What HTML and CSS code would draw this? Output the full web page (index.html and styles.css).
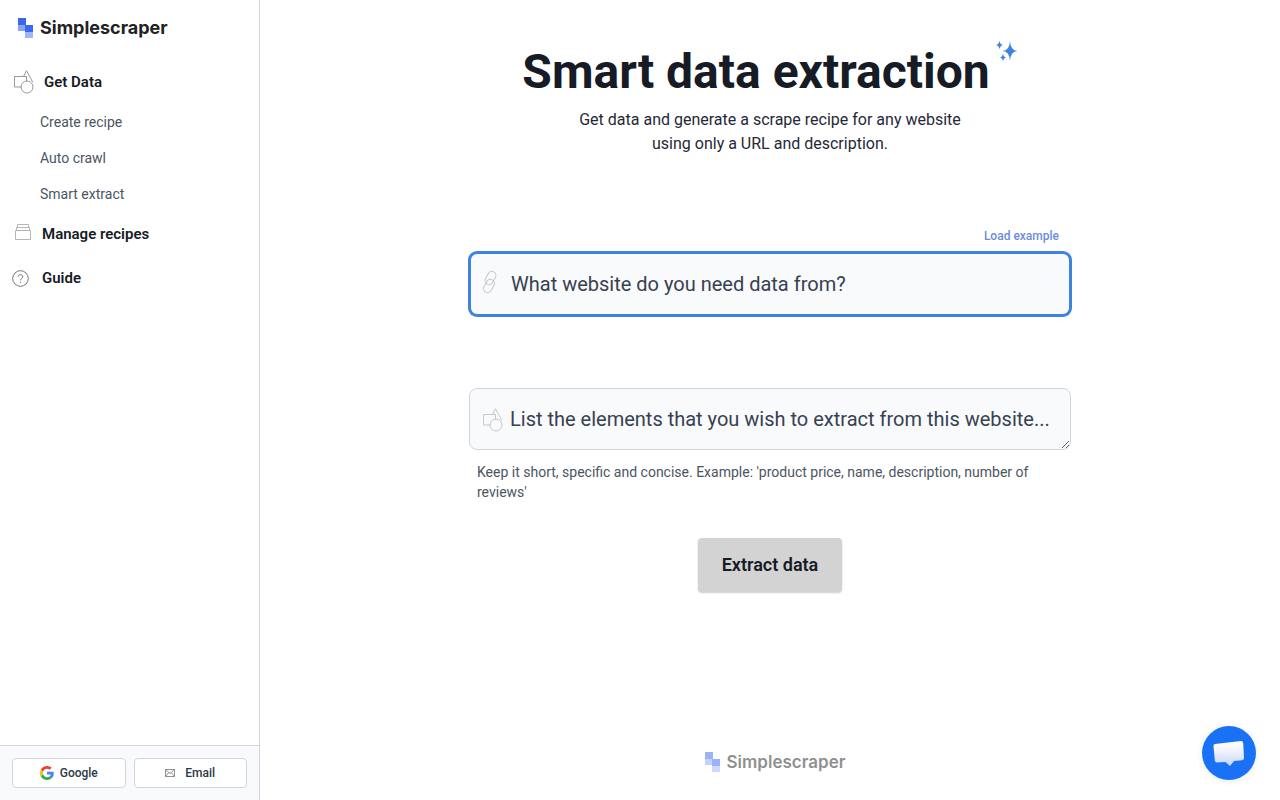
FILE: index.html
```html
<!DOCTYPE html>
<html lang="en">
<head>
    <meta charset="utf-8">
    <meta name="viewport" content="width=device-width, initial-scale=1">
    <title>Smart extract - Simplescraper</title>
    <link rel="stylesheet" href="styles.css">
</head>
<body>
    <!-- Shared icons -->
    <svg class="icon-defs" aria-hidden="true">
        <symbol id="icon-brand" viewBox="0 0 15 21">
            <rect x="0" y="6" width="8" height="7" fill="#86a4fb"/>
            <rect x="7" y="13" width="8" height="7" fill="#9db6fc"/>
            <rect x="0" y="0" width="8" height="7" fill="#3b68e8"/>
            <rect x="7" y="7" width="8" height="7" fill="#3b68f0"/>
        </symbol>
        <symbol id="icon-shapes" viewBox="0 0 20 24">
            <path d="M7.500 17H.5V6.500H12.500V11.500M9.500 6.500L12.500 .7L18.900 12.500" fill="none" stroke="currentColor" stroke-width="1"/>
            <circle cx="13" cy="17" r="6" fill="none" stroke="currentColor" stroke-width="1"/>
        </symbol>
    </svg>

    <div class="layout">
        <aside class="sidebar">
            <a href="#" class="brand">
                <svg class="brand-mark"><use href="#icon-brand"/></svg>
                <span>Simplescraper</span>
            </a>

            <nav class="menu">
                <a href="#" class="menu-item menu-item-wide">
                    <svg class="icon-shapes"><use href="#icon-shapes"/></svg>
                    <span>Get Data</span>
                </a>
                <div class="submenu">
                    <a href="#">Create recipe</a>
                    <a href="#">Auto crawl</a>
                    <a href="#">Smart extract</a>
                </div>
                <a href="#" class="menu-item">
                    <svg class="icon-box" viewBox="0 0 16 20" fill="none" stroke="currentColor">
                        <path d="M.5 6.500H15.500V15.500H.5ZM1.500 6V3.500H14.500V6M2.500 3V.5H13.500V3"/>
                    </svg>
                    <span>Manage recipes</span>
                </a>
                <a href="#" class="menu-item">
                    <svg class="icon-help" viewBox="0 0 17 17" fill="none" stroke="currentColor">
                        <circle cx="8.500" cy="8.500" r="7.800"/>
                        <path d="M6.200 6.800C6.200 3.900 10.800 3.900 10.800 6.700C10.800 8.500 8.500 8.300 8.500 10.400M8.500 11.700V12.800"/>
                    </svg>
                    <span>Guide</span>
                </a>
            </nav>

            <div class="login">
                <button type="button" class="login-button">
                    <svg class="icon-google" viewBox="0 0 48 48">
                        <path fill="#EA4335" d="M24 9.500c3.540 0 6.710 1.220 9.210 3.600l6.850-6.850C35.900 2.380 30.470 0 24 0 14.620 0 6.510 5.380 2.560 13.220l7.980 6.190C12.430 13.720 17.740 9.500 24 9.500z"/>
                        <path fill="#4285F4" d="M46.980 24.550c0-1.570-.15-3.090-.38-4.550H24v9.020h12.940c-.58 2.960-2.260 5.480-4.780 7.180l7.730 6c4.510-4.180 7.090-10.360 7.090-17.650z"/>
                        <path fill="#FBBC05" d="M10.530 28.590c-.48-1.450-.76-2.990-.76-4.590s.27-3.140.76-4.590l-7.980-6.190C.92 16.460 0 20.120 0 24c0 3.880.92 7.540 2.560 10.780l7.970-6.190z"/>
                        <path fill="#34A853" d="M24 48c6.480 0 11.930-2.130 15.890-5.810l-7.730-6c-2.150 1.450-4.920 2.300-8.160 2.300-6.260 0-11.570-4.220-13.470-9.910l-7.980 6.190C6.510 42.620 14.620 48 24 48z"/>
                    </svg>
                    Google
                </button>
                <button type="button" class="login-button login-email">
                    <svg class="icon-mail" viewBox="0 0 10 8" fill="none" stroke="currentColor" stroke-width=".8">
                        <path d="M.5 .5H9.500V7.500H.5ZM.5 .5L5 4.500L9.500 .5M.5 7.500L3.800 3.500M9.500 7.500L6.200 3.500"/>
                    </svg>
                    Email
                </button>
            </div>
        </aside>

        <main class="content">
            <header class="intro">
                <h1>
                    Smart data extraction
                    <svg class="sparkles" viewBox="0 0 22 22" fill="#3f83e0">
                        <path d="M14 1Q14.400 10.400 21.500 11Q14.400 11.600 14 21Q13.600 11.600 6.500 11Q13.600 10.400 14 1Z"/>
                        <path d="M3.500 .5Q4 4.500 7 5Q4 5.500 3.500 9.500Q3 5.500 0 5Q3 4.500 3.500 .5Z"/>
                        <path d="M7 13.500Q7.500 17 10 17.500Q7.500 18 7 21.500Q6.500 18 4 17.500Q6.500 17 7 13.500Z"/>
                    </svg>
                </h1>
                <p>Get data and generate a scrape recipe for any website using only a URL and description.</p>
            </header>

            <form class="extract-form">
                <button type="button" class="load-example">Load example</button>
                <div class="field">
                    <svg class="field-icon icon-link" viewBox="0 0 14 24" fill="none" stroke="currentColor">
                        <rect x="3.500" y="1" width="8" height="14" rx="4" transform="rotate(28 7.500 8)"/>
                        <rect x="2" y="9" width="8" height="14" rx="4" transform="rotate(28 6 16)"/>
                    </svg>
                    <input type="text" id="website" class="field-control field-url" aria-label="Website" placeholder="What website do you need data from?">
                </div>
                <div class="field">
                    <svg class="field-icon icon-shapes"><use href="#icon-shapes"/></svg>
                    <textarea id="elements" class="field-control field-elements" rows="1" aria-label="Elements to extract" placeholder="List the elements that you wish to extract from this website..."></textarea>
                </div>
                <p class="hint">Keep it short, specific and concise. Example: 'product price, name, description, number of reviews'</p>
                <button type="submit" class="extract-button">Extract data</button>
            </form>

            <footer class="brand brand-footer">
                <svg class="brand-mark"><use href="#icon-brand"/></svg>
                <span>Simplescraper</span>
            </footer>
        </main>
    </div>

    <button type="button" class="chat-button" aria-label="Open chat">
        <svg viewBox="0 0 54 54">
            <defs>
                <linearGradient id="bubble" x1="0" y1="0" x2="0" y2="1">
                    <stop offset="0" stop-color="#ffffff"/>
                    <stop offset=".35" stop-color="#f4f6fe"/>
                    <stop offset="1" stop-color="#c3d6fb"/>
                </linearGradient>
            </defs>
            <path fill="url(#bubble)" d="M13 18L39 15Q41 15 41.200 17L42 32Q42 34 40 34.300L32 35L28 40L23.500 36L15 36.600Q13 36.600 12.800 34.600L11.500 20Q11.500 18.200 13 18Z"/>
        </svg>
    </button>
</body>
</html>
```
FILE: styles.css
```css
* {
    box-sizing: border-box;
}

body {
    margin: 0;
    font-family: Roboto, Arial, sans-serif;
    color: #161b26;
    background-color: #fff;
}

a {
    color: inherit;
    text-decoration: none;
}

button {
    font-family: inherit;
    cursor: pointer;
}

.icon-defs {
    display: none;
}

.layout {
    display: flex;
    min-height: 100vh;
}

/* Sidebar */
.sidebar {
    display: flex;
    flex-direction: column;
    flex: none;
    width: 260px;
    border-right: 1px solid #d1d5db;
}

.brand {
    display: flex;
    align-items: center;
    gap: 7px;
    padding: 16px 18px 20px;
    font-family: Inter, sans-serif;
    font-size: 18px;
    font-weight: 700;
    line-height: 24px;
    color: #222;
}

.brand-mark {
    width: 15px;
    height: 21px;
}

.menu {
    display: flex;
    flex-direction: column;
    gap: 4px;
    padding: 2px 12px;
}

.menu-item {
    display: flex;
    align-items: center;
    gap: 13px;
    height: 40px;
    font-size: 15px;
    font-weight: 600;
}

.menu-item-wide {
    gap: 10px;
}

.menu-item svg {
    flex: none;
    color: #777;
}

.icon-shapes {
    width: 20px;
    height: 24px;
}

.menu-item .icon-shapes {
    margin-left: 2px;
    color: #999;
}

.menu-item .icon-box {
    width: 16px;
    height: 20px;
    margin-left: 3px;
    margin-right: -2px;
    color: #b5b5b5;
}

.icon-help {
    width: 17px;
    height: 17px;
}

.submenu {
    display: flex;
    flex-direction: column;
    padding-left: 28px;
    margin: -2px 0;
}

.submenu a {
    font-size: 14px;
    line-height: 36px;
    color: #4b5563;
}

.login {
    display: flex;
    gap: 8px;
    margin-top: auto;
    padding: 12px;
    border-top: 1px solid #d1d5db;
    background-color: #f9fafb;
}

.login-button {
    display: flex;
    flex: 1;
    align-items: center;
    justify-content: center;
    gap: 6px;
    height: 30px;
    padding: 0;
    border: 1px solid #d1d5db;
    border-radius: 4px;
    background-color: #fff;
    font-size: 12px;
    font-weight: 500;
    color: #2d3748;
}

.login-email {
    gap: 10px;
}

.icon-google {
    width: 14px;
    height: 14px;
}

.icon-mail {
    width: 10px;
    height: 8px;
    color: #777;
}

/* Main content */
.content {
    display: flex;
    flex: 1;
    flex-direction: column;
    align-items: center;
    padding: 48px 24px 6px;
}

.intro {
    text-align: center;
}

.intro h1 {
    display: flex;
    align-items: flex-start;
    gap: 6px;
    margin: 0 0 12px;
    font-size: 48px;
    font-weight: 700;
    line-height: 48px;
}

.sparkles {
    width: 22px;
    height: 22px;
    margin-top: -8px;
}

.intro p {
    max-width: 400px;
    margin: 0 auto;
    font-size: 16px;
    line-height: 24px;
    color: #1f2937;
}

.extract-form {
    display: flex;
    flex-direction: column;
    width: 100%;
    max-width: 602px;
    margin-top: 72px;
}

.load-example {
    align-self: flex-end;
    margin: 0 12px 8px 0;
    padding: 0;
    border: none;
    background: none;
    font-size: 12px;
    font-weight: 500;
    line-height: 16px;
    color: #6b8de0;
}

.field {
    display: flex;
    position: relative;
    margin-bottom: 72px;
}

.field-icon {
    position: absolute;
    top: 20px;
    left: 14px;
    color: #c4c7cc;
}

.icon-link {
    width: 14px;
    height: 24px;
    top: 18px;
}

.field-control {
    width: 100%;
    border: 1px solid #d1d5db;
    border-radius: 8px;
    outline: none;
    background-color: #f9fafb;
    font-family: inherit;
    font-size: 20px;
    line-height: 28px;
    color: #374151;
}

.field-control::placeholder {
    color: #374151;
    opacity: 1;
}

.field-url {
    height: 64px;
    padding: 0 16px 0 40px;
    border: 2px solid #3f83e0;
    box-shadow: 0 0 0 1px #3f83e0;
}

.field-elements {
    height: 62px;
    padding: 16px 8px 16px 40px;
    resize: vertical;
    overflow: hidden;
}

.hint {
    margin: -60px 8px 36px;
    font-size: 14px;
    line-height: 20px;
    color: #4b5563;
}

.extract-button {
    align-self: center;
    padding: 15px 24px;
    border: none;
    border-radius: 4px;
    background-color: #d3d3d3;
    box-shadow: 0 1px 2px rgba(0, 0, 0, 0.2);
    font-size: 18px;
    font-weight: 600;
    line-height: 24px;
    color: #161b26;
}

.brand-footer {
    margin-top: auto;
    padding-right: 8px;
    font-size: 17px;
    font-weight: 600;
    opacity: 0.5;
}

/* Chat launcher */
.chat-button {
    position: fixed;
    right: 24px;
    bottom: 20px;
    width: 54px;
    height: 54px;
    padding: 0;
    border: none;
    border-radius: 50%;
    background-color: #1972f5;
    box-shadow: 0 1px 6px rgba(0, 0, 0, 0.1);
}

.chat-button svg {
    display: block;
}
```
